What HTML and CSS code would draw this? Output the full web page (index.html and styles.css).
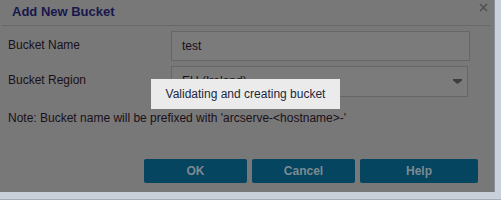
FILE: index.html
```html
<!DOCTYPE html>
<html lang="en">
<head>
  <meta charset="UTF-8">
  <title>Add New Bucket</title>
  <link rel="stylesheet" href="styles.css">
</head>
<body>
  <div class="frame">
    <div class="dialog">
      <div class="title-bar">
        <h1>Add New Bucket</h1>
        <svg class="close" width="9" height="9" viewBox="0 0 9 9">
          <path d="M1 1L8 8M8 1L1 8" stroke="#505050" stroke-width="1.6"/>
        </svg>
      </div>

      <div class="row">
        <label>Bucket Name</label>
        <div class="field">test</div>
      </div>
      <div class="row">
        <label>Bucket Region</label>
        <div class="field select">EU (Ireland)
          <svg class="arrow" width="9" height="5" viewBox="0 0 9 5">
            <path d="M0 0H9V1.5L4.5 5L0 1.5Z" fill="#3e3e3e"/>
          </svg>
        </div>
      </div>

      <p class="note">Note: Bucket name will be prefixed with 'arcserve-&lt;hostname&gt;-'</p>

      <div class="buttons">
        <button class="btn">OK</button>
        <button class="btn">Cancel</button>
        <button class="btn wide">Help</button>
      </div>

      <div class="toast">Validating and creating bucket</div>
    </div>
  </div>
</body>
</html>
```

FILE: styles.css
```css
*{margin:0;padding:0;box-sizing:border-box;}
html,body{background:#c9d0d9;}
body{font-family:"Liberation Sans",Arial,sans-serif;font-size:12px;color:#1a101a;}
.frame{height:200px;border-bottom:1px solid #a3acb9;}
.dialog{position:relative;width:495px;height:192px;background:#787878;border-right:1px solid #8a9098;}

.title-bar{display:flex;justify-content:space-between;height:26px;margin:0 4px 0 2px;border-bottom:1px solid #686868;}
.title-bar h1{font-size:13px;line-height:23px;font-weight:bold;color:#17174c;padding-left:10px;}
.close{margin-top:3px;margin-right:2px;}

.row{display:flex;margin-top:5px;padding-left:8px;}
.row + .row{margin-top:5px;}
.row label{width:163px;padding-top:7px;line-height:14px;}
.field{position:relative;width:299px;height:30px;line-height:28px;padding-left:10px;background:#7b7b7b;border:1px solid #666;}
.select{width:297px;height:31px;}
.arrow{position:absolute;right:5px;top:12px;}

.note{margin-top:14px;padding-left:8px;line-height:14px;}

.buttons{display:flex;justify-content:flex-end;gap:5px;margin-top:34px;padding-right:16px;}
.btn{width:103px;height:24px;border:none;border-radius:2px;background:#05455f;color:#7d8a92;font-family:"Liberation Sans",Arial,sans-serif;font-size:12px;font-weight:bold;}
.btn.wide{width:118px;}

.toast{position:absolute;left:151px;top:79px;width:189px;height:30px;line-height:30px;text-align:center;background:#ebebeb;color:#1c2840;}
```
